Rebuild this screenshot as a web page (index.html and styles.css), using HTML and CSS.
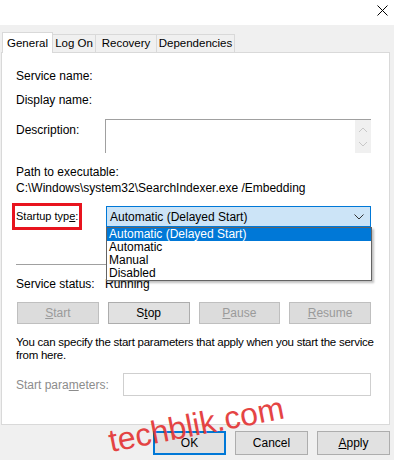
FILE: index.html
```html
<!DOCTYPE html>
<html lang="en">
<head>
  <meta charset="UTF-8">
  <title>Windows Search Properties</title>
  <link rel="stylesheet" href="styles.css">
</head>
<body>
  <div class="dialog">
    <div class="titlebar">
      <svg class="close" width="11" height="11" viewBox="0 0 11 11">
        <path d="M0.5 0.5 L10.5 10.5 M10.5 0.5 L0.5 10.5" stroke="#000" stroke-width="1" fill="none"/>
      </svg>
    </div>

    <div class="tabs">
      <div class="tab active">General</div>
      <div class="tab logon">Log On</div>
      <div class="tab recovery">Recovery</div>
      <div class="tab deps">Dependencies</div>
    </div>

    <div class="panel">
      <div class="row first">
        <span class="label">Service name:</span>
      </div>
      <div class="row">
        <span class="label">Display name:</span>
      </div>
      <div class="row desc-row">
        <span class="label">Description:</span>
        <div class="desc-box">
          <div class="spin">
            <svg width="10" height="6" viewBox="0 0 10 6"><path d="M1 5 L5 1 L9 5" stroke="#c8c8c8" fill="none"/></svg>
            <svg width="10" height="6" viewBox="0 0 10 6"><path d="M1 1 L5 5 L9 1" stroke="#c8c8c8" fill="none"/></svg>
          </div>
        </div>
      </div>
      <div class="path-label">Path to executable:</div>
      <div class="path">C:\Windows\system32\SearchIndexer.exe /Embedding</div>

      <div class="row startup-row">
        <span class="label highlight">Startup typ<u>e</u>:</span>
        <div class="select-wrap">
          <div class="select">
            <span>Automatic (Delayed Start)</span>
            <svg width="10" height="6" viewBox="0 0 10 6"><path d="M0.5 0.5 L5 5 L9.5 0.5" stroke="#333" fill="none"/></svg>
          </div>
          <ul class="options">
            <li class="selected">Automatic (Delayed Start)</li>
            <li>Automatic</li>
            <li>Manual</li>
            <li>Disabled</li>
          </ul>
        </div>
      </div>

      <div class="separator"></div>

      <div class="row status-row">
        <span class="label">Service status:</span>
        <span>Running</span>
      </div>

      <div class="buttons">
        <button class="btn disabled"><u>S</u>tart</button>
        <button class="btn">S<u>t</u>op</button>
        <button class="btn disabled"><u>P</u>ause</button>
        <button class="btn disabled"><u>R</u>esume</button>
      </div>

      <p class="note">You can specify the start parameters that apply when you start the service<br>from here.</p>

      <div class="row params-row">
        <span class="label muted">Start para<u>m</u>eters:</span>
        <div class="input"></div>
      </div>
    </div>

    <div class="footer">
      <button class="btn wide focus">OK</button>
      <button class="btn wide">Cancel</button>
      <button class="btn wide"><u>A</u>pply</button>
    </div>

    <div class="watermark">techblik.com</div>
  </div>
</body>
</html>
```

FILE: styles.css
```css
body {
  margin: 0;
  padding: 0;
  font-family: "Liberation Sans", Arial, sans-serif;
  font-size: 12px;
  color: #000;
  background-color: #f0f0f0;
}

.dialog {
  width: 394px;
  height: 460px;
  position: relative;
  overflow: hidden;
  background-color: #f0f0f0;
}

.titlebar {
  height: 25px;
  background-color: #fff;
  display: flex;
  justify-content: flex-end;
  align-items: flex-start;
}

.titlebar .close {
  margin: 5px 6px 0 0;
}

.tabs {
  display: flex;
  align-items: flex-end;
  height: 27px;
  padding-left: 2px;
}

.tab {
  height: 17px;
  line-height: 17px;
  text-align: center;
  background-color: #f0f0f0;
  border: 1px solid #d9d9d9;
  border-bottom: none;
  white-space: nowrap;
  font-size: 11.5px;
}

.tab.active {
  width: 49px;
  height: 20px;
  line-height: 20px;
  background-color: #fff;
  margin-bottom: -1px;
  position: relative;
  z-index: 1;
}

.tab.logon {
  width: 42px;
  border-left: none;
}

.tab.recovery {
  width: 60px;
  border-left: none;
}

.tab.deps {
  width: 77px;
  border-left: none;
}

.panel {
  margin: 0 4px 0 1px;
  height: 373px;
  box-sizing: border-box;
  background-color: #fff;
  border: 1px solid #d9d9d9;
  padding: 0 18px 0 14px;
}

.row {
  display: flex;
  align-items: center;
  height: 16px;
  margin-top: 8px;
}

.row.first {
  margin-top: 15px;
}

.label {
  width: 89px;
  flex-shrink: 0;
  white-space: nowrap;
}

.desc-row {
  height: 34px;
  margin-top: 11px;
  align-items: flex-start;
}

.desc-row .label {
  padding-top: 4px;
}

.desc-box {
  flex: 1;
  height: 34px;
  box-sizing: border-box;
  border-top: 1px solid #a0a0a0;
  border-left: 1px solid #a0a0a0;
  display: flex;
  justify-content: flex-end;
}

.spin {
  width: 16px;
  background-color: #f0f0f0;
  display: flex;
  flex-direction: column;
  align-items: center;
  justify-content: center;
  gap: 8px;
}

.path-label {
  margin-top: 11px;
  line-height: 16px;
}

.path {
  line-height: 16px;
}

.startup-row {
  height: 27px;
  margin-top: 7px;
}

.highlight {
  width: 63px;
  height: 21px;
  line-height: 21px;
  font-size: 11px;
  border: 3px solid #e8141e;
  margin-left: -4px;
  padding-left: 1px;
  margin-right: 24px;
}

.select-wrap {
  flex: 1;
  position: relative;
}

.select {
  height: 21px;
  box-sizing: border-box;
  border: 1px solid #0078d7;
  background-color: #cce4f7;
  display: flex;
  align-items: center;
  justify-content: space-between;
  padding: 0 6px 0 3px;
}

.options {
  position: absolute;
  top: 21px;
  left: 0;
  right: -1px;
  margin: 0;
  padding: 0;
  list-style: none;
  background-color: #fff;
  border: 1px solid #646464;
  box-shadow: 2px 2px 2px rgba(0, 0, 0, 0.25);
  z-index: 2;
}

.options li {
  height: 13px;
  line-height: 13px;
  padding-left: 2px;
}

.options li.selected {
  background-color: #0078d7;
  color: #fff;
}

.separator {
  height: 1px;
  background-color: #a0a0a0;
  margin-top: 34px;
}

.status-row {
  margin-top: 11px;
}

.buttons {
  display: flex;
  gap: 9px;
  margin-top: 10px;
  margin-left: 1px;
}

.btn {
  font-family: inherit;
  font-size: 12px;
  color: #000;
  width: 82px;
  height: 22px;
  padding: 0;
  background-color: #e1e1e1;
  border: 1px solid #adadad;
}

.btn.disabled {
  color: #9a9a9a;
  background-color: #dcdcdc;
  border-color: #bfbfbf;
}

.note {
  margin: 12px -20px 0 0;
  line-height: 13px;
  font-size: 11.5px;
  letter-spacing: -0.25px;
  white-space: nowrap;
}

.params-row {
  height: 23px;
  margin-top: 11px;
}

.muted {
  color: #8c8c8c;
  width: 107px;
}

.input {
  flex: 1;
  height: 23px;
  box-sizing: border-box;
  border: 1px solid #cfcfcf;
}

.footer {
  display: flex;
  justify-content: flex-end;
  gap: 9px;
  padding: 6px 4px 0 0;
}

.btn.wide {
  width: 73px;
  height: 24px;
}

.btn.focus {
  border: 2px solid #0078d7;
}

.watermark {
  position: absolute;
  left: 112px;
  top: 425px;
  font-size: 32px;
  line-height: 32px;
  color: #e33535;
  transform: rotate(-11deg);
  transform-origin: left bottom;
  opacity: 0.92;
  white-space: nowrap;
}
```
